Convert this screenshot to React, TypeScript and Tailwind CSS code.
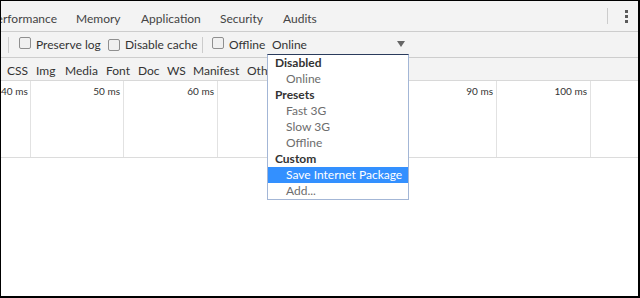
import React from "react";

const font = { fontFamily: 'Lato, "Open Sans", sans-serif' };

function Checkbox() {
  return <span className="inline-block w-[12px] h-[12px] rounded-[2px] border border-[#8f8f8f] bg-[#f0f0f0] shrink-0" />;
}

export default function App() {
  const tabs: [string, number][] = [
    ["Memory", 65],
    ["Application", 79],
    ["Security", 63],
    ["Audits", 40],
  ];
  const filters: [string, number][] = [
    ["CSS", 29],
    ["Img", 29],
    ["Media", 41],
    ["Font", 32],
    ["Doc", 29],
    ["WS", 26],
    ["Manifest", 54],
    ["Other", 40],
  ];
  const cols: [number, string][] = [
    [30, "40 ms"],
    [93, "50 ms"],
    [94, "60 ms"],
    [93, ""],
    [93, ""],
    [93, "90 ms"],
    [94, "100 ms"],
  ];
  const menu: { t: string; h?: boolean; sel?: boolean }[] = [
    { t: "Disabled", h: true },
    { t: "Online" },
    { t: "Presets", h: true },
    { t: "Fast 3G" },
    { t: "Slow 3G" },
    { t: "Offline" },
    { t: "Custom", h: true },
    { t: "Save Internet Package", sel: true },
    { t: "Add..." },
  ];
  return (
    <div
      style={font}
      className="relative w-[640px] h-[298px] box-border border-t border-l border-r-2 border-b-2 border-black bg-white overflow-hidden text-[12px] text-[#333]"
    >
      {/* Tab bar */}
      <div className="flex items-center h-[31px] bg-[#f3f3f3] border-b border-[#cdcdcd] pt-[6px] whitespace-nowrap">
        <div className="w-[75px] shrink-0 overflow-hidden flex justify-end pr-[19px]">
          <span className="text-[#444]">Performance</span>
        </div>
        {tabs.map(([t, w]) => (
          <div key={t} style={{ width: w }} className="shrink-0 text-[#444]">
            {t}
          </div>
        ))}
        <div className="flex-1" />
        <div className="w-px h-[16px] bg-[#cccccc] mt-[-6px] mr-[17px]" />
        <div className="flex flex-col gap-[2px] mt-[-6px] mr-[10px]">
          <span className="w-[3px] h-[3px] bg-[#5a5a5a]" />
          <span className="w-[3px] h-[3px] bg-[#5a5a5a]" />
          <span className="w-[3px] h-[3px] bg-[#5a5a5a]" />
        </div>
      </div>

      {/* Toolbar */}
      <div className="flex items-center h-[26px] bg-[#f3f3f3] border-b border-[#cdcdcd] whitespace-nowrap">
        <div className="w-px h-[16px] bg-[#cccccc] ml-[7px]" />
        <div className="ml-[10px]"><Checkbox /></div>
        <span className="ml-[5px] w-[72px] shrink-0">Preserve log</span>
        <Checkbox />
        <span className="ml-[5px] w-[77px] shrink-0">Disable cache</span>
        <div className="w-px h-[16px] bg-[#cccccc]" />
        <div className="ml-[9px]"><Checkbox /></div>
        <span className="ml-[5px] w-[43px] shrink-0">Offline</span>
        <span className="w-[125px] shrink-0">Online</span>
        <svg width="8" height="6" viewBox="0 0 8 6" className="mt-[-2px]">
          <path d="M0 0 L8 0 L4 6 Z" fill="#666" />
        </svg>
      </div>

      {/* Filter row */}
      <div className="flex items-center h-[23px] bg-[#f3f3f3] border-b border-[#d8d8d8] pt-[3px] pl-[6px] whitespace-nowrap">
        {filters.map(([t, w]) => (
          <div key={t} style={{ width: w }} className="shrink-0 text-[#333]">
            {t}
          </div>
        ))}
      </div>

      {/* Timeline */}
      <div className="flex h-[77px] border-b border-[#dcdcdc]">
        {cols.map(([w, l], i) => (
          <div
            key={i}
            style={{ width: w }}
            className="shrink-0 border-r border-[#e2e2e2] text-right pr-[3px] pt-[3px] text-[10px] text-[#333] leading-[14px] whitespace-nowrap overflow-hidden"
          >
            {l}
          </div>
        ))}
        <div className="flex-1" />
      </div>

      {/* Dropdown menu */}
      <div className="absolute left-[266px] top-[53px] w-[142px] bg-white border border-[#a3b6d6] border-t-[#2a3b5c] whitespace-nowrap">
        {menu.map((m) => (
          <div
            key={m.t}
            className={
              "h-[16px] leading-[16px] " +
              (m.h
                ? "pl-[7px] font-bold text-[#333]"
                : m.sel
                ? "pl-[18px] bg-[#3390ff] text-white"
                : "pl-[18px] text-[#6d6d6d]")
            }
          >
            {m.t}
          </div>
        ))}
      </div>
    </div>
  );
}
